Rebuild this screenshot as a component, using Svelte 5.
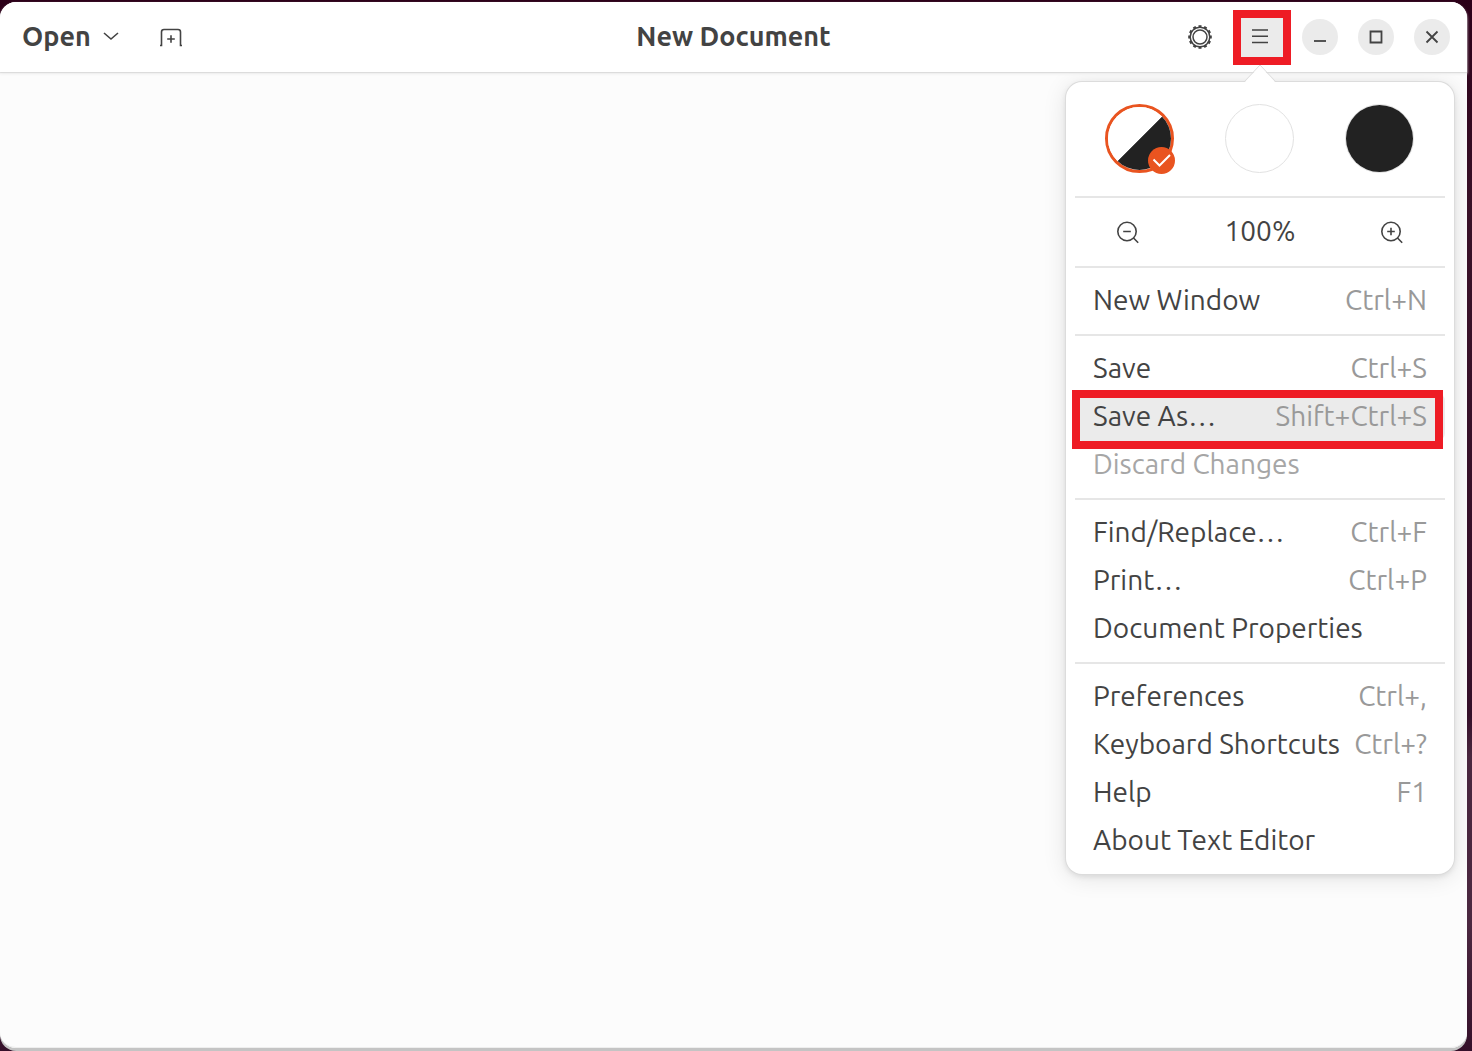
<script>
  const sections = [
    [{ label: 'New Window', keys: 'Ctrl+N' }],
    [
      { label: 'Save', keys: 'Ctrl+S' },
      { label: 'Save As…', keys: 'Shift+Ctrl+S', active: true },
      { label: 'Discard Changes', disabled: true },
    ],
    [
      { label: 'Find/Replace…', keys: 'Ctrl+F' },
      { label: 'Print…', keys: 'Ctrl+P' },
      { label: 'Document Properties' },
    ],
    [
      { label: 'Preferences', keys: 'Ctrl+,' },
      { label: 'Keyboard Shortcuts', keys: 'Ctrl+?' },
      { label: 'Help', keys: 'F1' },
      { label: 'About Text Editor' },
    ],
  ];
  const teeth = Array.from({ length: 12 }, (_, i) => i * 30);
  let theme = $state('system');
</script>

<div class="desktop">
  <div class="window">
    <header>
      <div class="start">
        <button class="open">
          Open
          <svg width="16" height="10" viewBox="0 0 16 10" aria-hidden="true"><path d="M1 2l7 6 7-6" /></svg>
        </button>
        <button class="newtab" aria-label="New tab">
          <svg width="24" height="20" viewBox="0 0 24 20" aria-hidden="true">
            <path d="M1 18.500h1.500V5Q2.500 2.500 5 2.500h14q2.500 0 2.500 2.500v13.500H23M12 8.200v7.600M8.200 12h7.600" />
          </svg>
        </button>
      </div>
      <h1>New Document</h1>
      <div class="end">
        <button class="gear" aria-label="Document settings">
          <svg width="26" height="26" viewBox="0 0 26 26" aria-hidden="true">
            {#each teeth as a}
              <path class="tooth" d="M11.500 2.300h3" transform={`rotate(${a} 13 13)`} />
            {/each}
            <circle cx="13" cy="13" r="9.800" />
            <circle cx="13" cy="13" r="7" />
          </svg>
        </button>
        <button class="menu" aria-label="Main menu" aria-expanded="true">
          <svg class="lines" width="18" height="16" viewBox="0 0 18 16" aria-hidden="true"><path d="M1 1h16M1 7.300h16M1 13.500h16" /></svg>
          <svg class="arrow" width="34" height="18" viewBox="0 0 34 18" aria-hidden="true">
            <path class="fill" d="M1 18 17 1l16 17z" /><path class="edge" d="M1 17 17 0l16 17" />
          </svg>
          <span class="marker"></span>
        </button>
        <div class="controls">
          <button aria-label="Minimize"><svg width="14" height="14" viewBox="0 0 14 14" aria-hidden="true"><path d="M1 11h12" /></svg></button>
          <button aria-label="Maximize"><svg width="14" height="14" viewBox="0 0 14 14" aria-hidden="true"><path d="M1.500 1.500h11v11h-11z" /></svg></button>
          <button aria-label="Close"><svg width="14" height="14" viewBox="0 0 14 14" aria-hidden="true"><path d="M1.500 1.500l11 11M12.500 1.500l-11 11" /></svg></button>
        </div>
      </div>
    </header>

    <main>
      <textarea aria-label="Document text" spellcheck="false"></textarea>
      <div class="popover">
        <div class="themes">
          {#each ['system', 'light', 'dark'] as t}
            <label class="swatch {t}">
              <input type="radio" name="theme" value={t} bind:group={theme} aria-label={`${t} style`} />
              {#if theme === t}
                <svg class="check" width="27" height="27" viewBox="0 0 27 27" aria-hidden="true">
                  <circle cx="13.500" cy="13.500" r="13.500" /><path d="M5.500 12.500l6 6L22 8" />
                </svg>
              {/if}
            </label>
          {/each}
        </div>
        <div class="zoom">
          <button aria-label="Zoom out">
            <svg width="24" height="24" viewBox="0 0 24 24" aria-hidden="true"><circle cx="11" cy="11.500" r="9.200" /><path d="M17.500 18l4.700 4.700M7.200 11.500h7.600" /></svg>
          </button>
          <button class="level">100%</button>
          <button aria-label="Zoom in">
            <svg width="24" height="24" viewBox="0 0 24 24" aria-hidden="true"><circle cx="11" cy="11.500" r="9.200" /><path d="M17.500 18l4.700 4.700M7.200 11.500h7.600M11 7.700v7.600" /></svg>
          </button>
        </div>
        {#each sections as items}
          <div class="section">
            {#each items as item}
              <button class="item" class:active={item.active} disabled={item.disabled}>
                <span>{item.label}</span>
                {#if item.keys}<span class="keys">{item.keys}</span>{/if}
                {#if item.active}<span class="marker"></span>{/if}
              </button>
            {/each}
          </div>
        {/each}
      </div>
    </main>
  </div>
</div>

<style>
  :global(body) { margin: 0; }
  * { box-sizing: border-box; }
  .desktop {
    display: flex;
    min-height: 100vh;
    padding: 2px 5px 3px 0;
    background: linear-gradient(#2c0019 0, #3a1229 20%, #35102a 68%, #4b2840 72%, #4b2840 88%, #35102a 100%);
    font-family: Ubuntu, "Noto Sans", sans-serif;
    color: #434343;
  }
  .window {
    flex: 1;
    display: flex;
    flex-direction: column;
    border-radius: 16px;
    background: #fcfcfc;
    box-shadow: 0 3px 0 #c4c4c4;
  }
  button {
    margin: 0;
    padding: 0;
    border: 0;
    background: none;
    font: inherit;
    color: inherit;
    display: flex;
    align-items: center;
    justify-content: center;
  }
  svg { fill: none; stroke: #434343; stroke-width: 2; }
  header {
    position: relative;
    z-index: 2;
    display: grid;
    grid-template-columns: 1fr auto 1fr;
    align-items: center;
    height: 70px;
    padding: 0 17px;
    background: #fff;
    border-radius: 16px 16px 0 0;
    box-shadow: 0 1px 1px #dadada, 0 2px 3px #ededed;
  }
  .start, .end, .controls { display: flex; align-items: center; }
  .start { gap: 40px; padding-left: 5px; }
  .open { gap: 12px; }
  .open, h1 { font-size: 27px; line-height: 36px; font-weight: 700; padding-bottom: 2px; }
  .open svg, .newtab svg { stroke-width: 1.600; }
  h1 { margin: 0; }
  .end { justify-content: flex-end; }
  .gear { width: 48px; height: 48px; margin-right: 11px; }
  .gear svg { stroke-width: 1.500; }
  .gear .tooth { stroke-width: 2.200; }
  .menu {
    position: relative;
    width: 50px;
    height: 48px;
    margin-right: 17px;
    border-radius: 8px;
    background: #ebebeb;
  }
  .lines { stroke-width: 1.600; }
  .arrow { position: absolute; left: 8px; top: 52px; }
  .arrow .fill { fill: #fff; stroke: none; }
  .arrow .edge { stroke: #dcdcdc; stroke-width: 1; }
  .marker { position: absolute; border: 8px solid #ee1c25; pointer-events: none; }
  .menu .marker { inset: -3px -6px -4px -2px; }
  .controls { gap: 20px; }
  .controls button { width: 36px; height: 36px; border-radius: 50%; background: #ebebeb; }
  .controls svg { stroke-width: 1.800; }
  main { flex: 1; position: relative; display: flex; border-radius: 0 0 16px 16px; }
  textarea {
    flex: 1;
    border: 0;
    outline: 0;
    resize: none;
    padding: 12px;
    background: #fcfcfc;
    border-radius: 0 0 16px 16px;
    font: 26px/36px "Liberation Mono", monospace;
    border-bottom: 1px solid #eee;
  }
  .popover {
    position: absolute;
    top: 10px;
    right: 13px;
    width: 388px;
    padding: 0 9px;
    background: #fff;
    border-radius: 16px;
    box-shadow: 0 0 0 1px #dcdcdc, 0 2px 6px rgba(0, 0, 0, 0.110), 0 3px 24px rgba(0, 0, 0, 0.110);
  }
  .themes { display: flex; align-items: center; justify-content: center; gap: 51px; height: 114px; padding: 0 1px 2px 0; }
  .swatch { position: relative; width: 69px; height: 69px; border-radius: 50%; border: 1px solid #e2e2e2; }
  .swatch input { appearance: none; display: block; width: 100%; height: 100%; margin: 0; border-radius: 50%; }
  .system { border: 3px solid #e95420; }
  .system input { background: linear-gradient(135deg, #fff 50%, #222 51%); }
  .dark input { background: #222; }
  .check { position: absolute; right: -4px; bottom: -4px; stroke: #fff; pointer-events: none; }
  .check circle { fill: #e95420; stroke: none; }
  .zoom {
    display: flex;
    align-items: center;
    justify-content: space-between;
    height: 70px;
    padding: 0 29px;
    border-top: 2px solid #e6e6e6;
    font-size: 28px;
    line-height: 36px;
  }
  .zoom button { min-width: 48px; height: 48px; }
  .zoom .level { padding-bottom: 3px; }
  .zoom svg { stroke-width: 1.600; }
  .section { padding: 9px 0; border-top: 2px solid #e6e6e6; }
  .item {
    position: relative;
    width: 100%;
    height: 48px;
    padding: 0 18px 3px;
    justify-content: space-between;
    border-radius: 8px;
    font-size: 28px;
    line-height: 36px;
    white-space: nowrap;
  }
  .item.active { background: #ebebeb; }
  .item .marker { inset: -3px 2px -8px -3px; }
  .keys { color: #999; }
  .item:disabled { color: #a6a6a6; }
</style>
